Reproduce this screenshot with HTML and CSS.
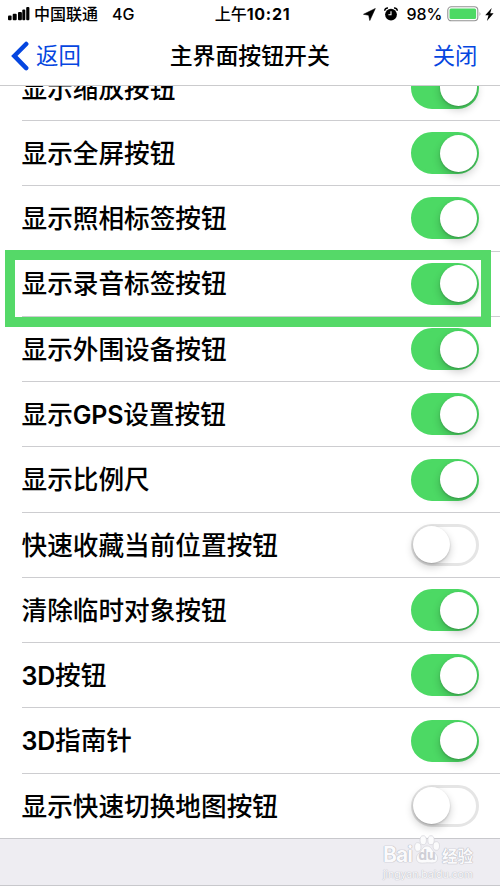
FILE: index.html
```html
<!DOCTYPE html>
<html lang="zh-CN">
<head>
<meta charset="utf-8">
<title>主界面按钮开关</title>
<link rel="stylesheet" href="styles.css">
</head>
<body>
<div class="screen">
  <header class="top">
    <div class="status">
      <div class="status-left">
        <svg class="signal" viewBox="0 0 22 14" width="22" height="14"><rect x="0" y="8.5" width="3.6" height="4.8" rx="1"/><rect x="4.7" y="6.8" width="4" height="6.5" rx="1"/><rect x="10" y="5" width="3.9" height="8.3" rx="1"/><rect x="14.3" y="2.6" width="3" height="10.7" rx="1"/><rect x="18.2" y="0" width="3.2" height="13.3" rx="1"/></svg>
        <span class="carrier">中国联通</span><span class="net">4G</span>
      </div>
      <div class="clock">上午<b>10:21</b></div>
      <div class="status-right">
        <svg class="loc" viewBox="0 0 13 13" width="13" height="13"><path d="M12.300.5.5 6.300 5.700 7.200 6.800 12.500Z" stroke="#000" stroke-width=".6" stroke-linejoin="round"/></svg>
        <svg class="alarm" viewBox="0 0 14 14" width="14" height="14"><circle cx="7" cy="7.6" r="5.9"/><path d="M.7 3.8A3 3 0 0 1 4 .9M10 .9a3 3 0 0 1 3.3 2.9" fill="none" stroke="#000" stroke-width="1.5"/><path d="M7 4.3v3.5H4.4" fill="none" stroke="#fff" stroke-width="1.1"/></svg>
        <span class="pct">98%</span>
        <svg class="battery" viewBox="0 0 35 16" width="35" height="16"><rect x=".8" y=".8" width="30" height="14" rx="3.5" fill="#fff" stroke="#929292" stroke-width="1.1"/><rect x="2.5" y="2.5" width="26.6" height="10.6" rx="1.5" fill="#4cd964"/><path d="M32.6 5.4q1.7 2.4 0 4.8z" fill="#929292"/></svg>
        <svg class="bolt" viewBox="0 0 9 13" width="9" height="13"><path d="M6.7 0 .2 7.2h3.3L1.9 13l6.7-7.7H5.2Z"/></svg>
      </div>
    </div>
    <nav class="nav">
      <div class="back"><svg viewBox="0 0 18 30" width="18" height="30"><path d="M15.2 3 3.3 14.9l11.9 12.2" fill="none" stroke="#0546e0" stroke-width="4.5" stroke-linecap="round"/></svg><span>返回</span></div>
      <h1>主界面按钮开关</h1>
      <span class="close">关闭</span>
    </nav>
  </header>
  <main class="viewport">
    <div class="list">
      <div class="row"><span>显示缩放按钮</span><i class="switch on"></i></div>
      <div class="row"><span>显示全屏按钮</span><i class="switch on"></i></div>
      <div class="row"><span>显示照相标签按钮</span><i class="switch on"></i></div>
      <div class="row marked"><span>显示录音标签按钮</span><i class="switch on"></i></div>
      <div class="row"><span>显示外围设备按钮</span><i class="switch on"></i></div>
      <div class="row"><span>显示<em>GPS</em>设置按钮</span><i class="switch on"></i></div>
      <div class="row"><span>显示比例尺</span><i class="switch on"></i></div>
      <div class="row"><span>快速收藏当前位置按钮</span><i class="switch"></i></div>
      <div class="row"><span>清除临时对象按钮</span><i class="switch on"></i></div>
      <div class="row"><span><em>3D</em>按钮</span><i class="switch on"></i></div>
      <div class="row"><span><em>3D</em>指南针</span><i class="switch on"></i></div>
      <div class="row last"><span>显示快速切换地图按钮</span><i class="switch"></i></div>
    </div>
  </main>
  <footer class="bottom">
    <div class="watermark">
      <div class="brand"><span class="bai">Bai</span><svg viewBox="0 0 26 30" width="26" height="30"><g fill="#fbfbfc" stroke="#d4d4da" stroke-width=".7"><ellipse cx="3.8" cy="12" rx="3.200" ry="4.300"/><ellipse cx="9.2" cy="5.2" rx="3.200" ry="4.500"/><ellipse cx="17" cy="5.2" rx="3.200" ry="4.500"/><ellipse cx="22.300" cy="11" rx="3.200" ry="4.300"/><path d="M13 11c-4 0-5 4-7.500 6.500S1.500 22 3 25.500s6 2.500 10 2.300 8.500 1.200 10-2.300-.2-5.800-2.600-8S17 11 13 11Z"/></g><text x="13" y="25" text-anchor="middle">du</text></svg><span class="exp">经验</span></div>
      <div class="url">jingyan.baidu.com</div>
    </div>
  </footer>
</div>
</body>
</html>
```
FILE: styles.css
```css
* { box-sizing: border-box; }
body { margin: 0; background: #fff; }
.screen {
  width: 500px; height: 889px; overflow: hidden;
  display: flex; flex-direction: column;
  font-family: Inter, "Noto Sans CJK SC", sans-serif;
  color: #000; background: #fff; white-space: nowrap;
}
svg { display: block; flex: none; }
.top { flex: none; height: 86px; background: #fff; border-bottom: 1px solid #cbcbcd; }
.status { height: 28px; display: grid; grid-template-columns: 1fr auto 1fr; align-items: center; font-size: 16px; line-height: 28px; font-weight: 500; }
.status-left { display: flex; align-items: center; padding-left: 8px; }
.carrier { margin-left: 4px; }
.net { margin-left: 14px; }
.clock { font-weight: 500; padding-left: 5px; }
.clock b { font-weight: 700; letter-spacing: .7px; }
.status-right { display: flex; align-items: center; justify-content: flex-end; padding-right: 6px; }
.alarm { margin-left: 8px; }
.pct { margin-left: 8px; }
.battery { margin-left: 4.500px; }
.bolt { margin-left: 3px; }
.nav { height: 57px; display: grid; grid-template-columns: 1fr auto 1fr; align-items: center; font-size: 22.4px; line-height: 30px; padding: 0 22.500px 2px 11px; }
.back { display: flex; align-items: center; gap: 7px; color: #0546e0; }
.back span, .close { padding-top: 1px; }
.nav h1 { margin: 0; font-size: 22.9px; font-weight: 500; padding: 1px 0 0 11px; }
.close { justify-self: end; color: #0546e0; }
.viewport { flex: none; height: 753px; overflow: hidden; display: flex; flex-direction: column; justify-content: flex-end; }
.list { flex: none; }
.row {
  position: relative; height: 65.27px; margin-left: 21.500px; padding-right: 21px;
  display: flex; align-items: center; justify-content: space-between;
  border-bottom: 1px solid #cdcdd0;
  font-size: 25.65px; line-height: 36px; font-weight: 500;
}
.row > span { padding-top: 1.500px; }
.row em { font-style: normal; font-weight: 600; font-size: 25px; letter-spacing: -.2px; }
.last { margin-left: 0; padding-left: 21.500px; border-color: #c8c8cc; }
.switch { flex: none; width: 68.500px; height: 42px; border-radius: 21px; border: 3px solid #e5e5e5; background: #fff; display: flex; }
.switch::after { content: ""; width: 37px; height: 37px; flex: none; border-radius: 50%; background: #fff; margin: -.5px; box-shadow: 0 4px 8px rgba(0,0,0,.2), 0 1px 2px rgba(0,0,0,.18); }
.on { background: #4cd964; border-color: #4cd964; justify-content: flex-end; }
.marked::after { content: ""; box-sizing: border-box; position: absolute; z-index: 2; left: -17px; top: -1.500px; width: 486px; height: 77px; border: 10px solid #55d968; }
.bottom { flex: none; height: 47px; background: #eeedf2; border-bottom: 1px solid #c8c8cc; position: relative; }
.watermark { position: absolute; left: 383px; top: -4px; color: #fafafc; }
.brand { display: flex; align-items: center; height: 30px; font-size: 20px; font-weight: 700; text-shadow: 0 0 1px #b4b4bc, 0 0 1px #b4b4bc, 0 0 1px #c8c8cf; }
.brand > span { padding-top: 9px; }
.brand .bai { width: 31px; font-size: 21px; letter-spacing: -.9px; }
.brand text { font: 700 14px Inter, sans-serif; fill: #cfcfd6; text-shadow: none; }
.brand .exp { font-size: 15.500px; margin-left: 2px; }
.url { font-size: 10.500px; line-height: 13px; margin-top: 3px; letter-spacing: -.05px; text-shadow: 0 0 1px #b4b4bc, 0 0 1px #c0c0c8; }
```
